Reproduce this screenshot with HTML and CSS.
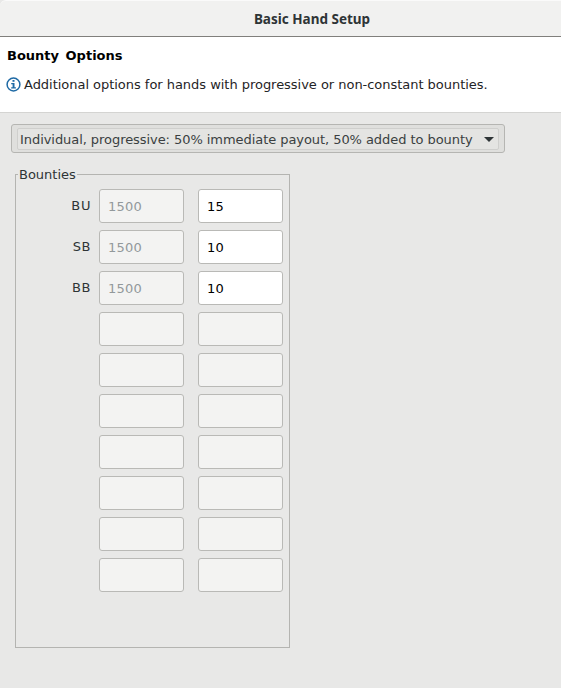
FILE: index.html
```html
<!DOCTYPE html>
<html lang="en">
<head>
    <meta charset="UTF-8">
    <title>Basic Hand Setup</title>
    <link rel="stylesheet" href="styles.css">
</head>
<body>
    <div class="titlebar">Basic Hand Setup</div>

    <div class="banner">
        <h3 class="banner-title">Bounty Options</h3>
        <div class="banner-info">
            <svg class="info-icon" width="15" height="15" viewBox="0 0 15 15">
                <circle cx="7.5" cy="7.5" r="6.4" fill="none" stroke="#1f6aa5" stroke-width="1.5"/>
                <rect x="6.5" y="3" width="2" height="1.8" fill="#1f6aa5"/>
                <path d="M5.2 6h3.3v4.2h1.4v1.2H5.2v-1.2h1.4V7.2H5.2z" fill="#1f6aa5"/>
            </svg>
            <span>Additional options for hands with progressive or non-constant bounties.</span>
        </div>
    </div>

    <div class="content">
        <div class="combo">
            <div class="combo-inner">
                <span>Individual, progressive: 50% immediate payout, 50% added to bounty</span>
                <span class="combo-arrow"></span>
            </div>
        </div>

        <fieldset class="bounties">
            <legend>Bounties</legend>
            <div class="row">
                <label>BU</label>
                <div class="field disabled">1500</div>
                <div class="field active">15</div>
            </div>
            <div class="row">
                <label>SB</label>
                <div class="field disabled">1500</div>
                <div class="field active">10</div>
            </div>
            <div class="row">
                <label>BB</label>
                <div class="field disabled">1500</div>
                <div class="field active">10</div>
            </div>
            <div class="row"><label></label><div class="field disabled"></div><div class="field disabled"></div></div>
            <div class="row"><label></label><div class="field disabled"></div><div class="field disabled"></div></div>
            <div class="row"><label></label><div class="field disabled"></div><div class="field disabled"></div></div>
            <div class="row"><label></label><div class="field disabled"></div><div class="field disabled"></div></div>
            <div class="row"><label></label><div class="field disabled"></div><div class="field disabled"></div></div>
            <div class="row"><label></label><div class="field disabled"></div><div class="field disabled"></div></div>
            <div class="row"><label></label><div class="field disabled"></div><div class="field disabled"></div></div>
        </fieldset>
    </div>
</body>
</html>
```

FILE: styles.css
```css
html, body {
    margin: 0;
    padding: 0;
}

body {
    width: 561px;
    height: 688px;
    overflow: hidden;
    background-color: #e8e8e7;
    font-family: "DejaVu Sans", sans-serif;
    font-size: 13px;
    color: #2e3436;
}

/* Window title */
.titlebar {
    box-sizing: border-box;
    height: 37px;
    padding-left: 63px;
    background-color: #f1f1f0;
    border-top: 1px solid #fafafa;
    border-bottom: 1px solid #807f7c;
    border-top-left-radius: 6px;
    text-align: center;
    line-height: 36px;
    font-family: "Noto Sans", sans-serif;
    font-weight: bold;
    font-size: 13.5px;
}

/* White header */
.banner {
    box-sizing: border-box;
    height: 76px;
    padding: 11px 7px 0 7px;
    background-color: #ffffff;
    border-bottom: 1px solid #d4d4d2;
    color: #000000;
}

.banner-title {
    margin: 0;
    font-size: 13px;
    line-height: 15px;
    font-weight: bold;
    word-spacing: 2px;
}

.banner-info {
    display: flex;
    align-items: center;
    gap: 3px;
    margin-top: 14px;
    line-height: 15px;
    letter-spacing: -0.03px;
    color: #1f2426;
}

.info-icon {
    flex: none;
    margin-left: -1px;
}

.content {
    padding: 11px 0 0 11px;
}

/* Dropdown */
.combo {
    box-sizing: border-box;
    width: 494px;
    height: 29px;
    padding: 3px 5px 3px 5px;
    background-color: #dfdfdd;
    border: 1px solid #b5b5b2;
    border-radius: 3px;
}

.combo-inner {
    box-sizing: border-box;
    display: flex;
    align-items: center;
    justify-content: space-between;
    width: 482px;
    height: 22px;
    padding: 1px 0 0 2px;
    background-color: #e4e4e2;
    border: 1px solid #cfcfcd;
    border-radius: 2px;
    letter-spacing: -0.06px;
    color: #3a3f41;
}

.combo-arrow {
    margin-right: 4px;
    border-left: 5px solid transparent;
    border-right: 5px solid transparent;
    border-top: 5px solid #2e3436;
}

/* Bounties group */
.bounties {
    box-sizing: border-box;
    width: 275px;
    height: 481px;
    margin: 14px 0 0 4px;
    padding: 7px 6px 0 0;
    border: 1px solid #b4b4b1;
    min-width: 0;
}

.bounties legend {
    padding: 0 1px;
    margin-left: 2px;
    line-height: 15px;
}

.row {
    display: flex;
    align-items: center;
    height: 34px;
    margin-bottom: 7px;
}

.row label {
    width: 75px;
    margin-right: 8px;
    padding-bottom: 1px;
    text-align: right;
    letter-spacing: 0.6px;
}

.field {
    box-sizing: border-box;
    width: 85px;
    height: 34px;
    margin-right: 14px;
    padding-left: 8px;
    line-height: 33px;
    letter-spacing: 0.2px;
    border: 1px solid #b9b9b6;
    border-radius: 3px;
}

.field:last-child {
    margin-right: 0;
}

.field.disabled {
    background-color: #f3f3f2;
    color: #92999b;
}

.field.active {
    background-color: #ffffff;
    color: #000000;
}
```
